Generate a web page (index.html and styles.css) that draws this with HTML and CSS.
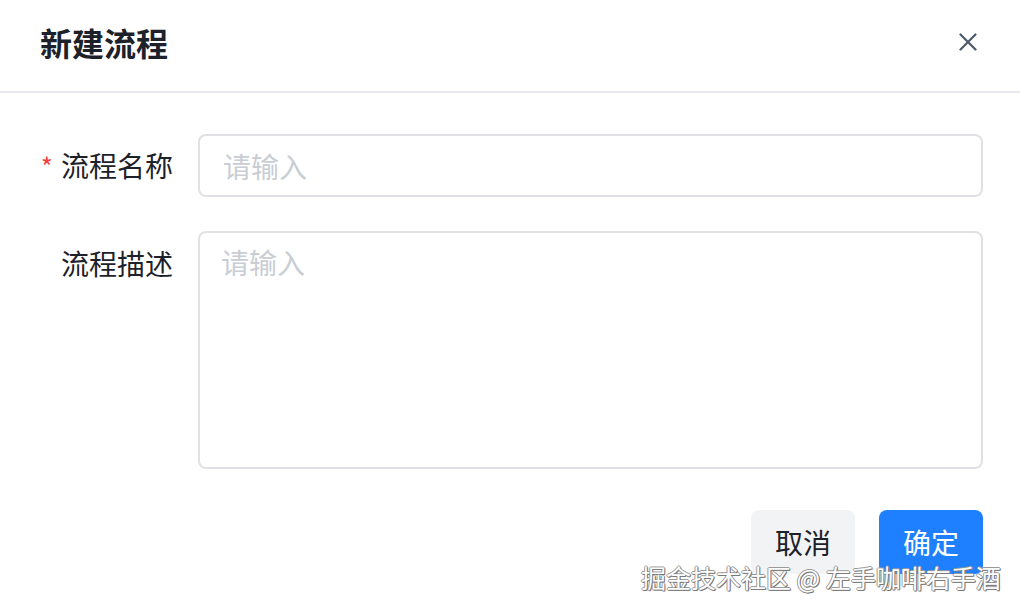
FILE: index.html
```html
<!DOCTYPE html>
<html lang="zh-CN">
<head>
  <meta charset="UTF-8">
  <meta name="viewport" content="width=device-width, initial-scale=1.0">
  <title>新建流程</title>
  <link rel="stylesheet" href="styles.css">
</head>
<body>
  <div class="dialog">
    <div class="dialog-header">
      <h2>新建流程</h2>
      <button type="button" class="close-btn" aria-label="关闭">
        <svg width="18" height="18" viewBox="0 0 18 18" fill="none">
          <path d="M1.5 1.5L16.5 16.5M16.5 1.5L1.5 16.5" stroke="#4e5969" stroke-width="2.2" stroke-linecap="round"/>
        </svg>
      </button>
    </div>

    <form class="dialog-body">
      <div class="form-row">
        <label for="name" class="form-label"><span class="required">*</span>流程名称</label>
        <input type="text" id="name" class="form-input" placeholder="请输入">
      </div>
      <div class="form-row">
        <label for="desc" class="form-label">流程描述</label>
        <textarea id="desc" class="form-textarea" placeholder="请输入"></textarea>
      </div>

      <div class="dialog-footer">
        <button type="button" class="btn btn-cancel">取消</button>
        <button type="button" class="btn btn-primary">确定</button>
      </div>
    </form>
  </div>

  <div class="watermark">掘金技术社区 @ 左手咖啡右手酒</div>
</body>
</html>
```

FILE: styles.css
```css
body {
  margin: 0;
  background-color: #ffffff;
  font-family: "Noto Sans CJK SC", "Noto Sans", sans-serif;
  color: #1d2129;
  height: 609px;
  overflow: hidden;
  position: relative;
}
.dialog {
  width: 1020px;
}
.dialog-header {
  height: 93px;
  border-bottom: 2px solid #e8e9ec;
  box-sizing: border-box;
  display: flex;
  align-items: center;
  justify-content: space-between;
  padding: 0 43px 8px 40px;
}
.dialog-header h2 {
  margin: 0;
  font-size: 32px;
  font-weight: 700;
  color: #1d2129;
  line-height: 1;
}
.close-btn {
  background: none;
  border: none;
  padding: 0;
  width: 18px;
  height: 18px;
  cursor: pointer;
  display: flex;
}
.dialog-body {
  padding: 41px 37px 0 40px;
  display: flex;
  flex-direction: column;
  gap: 34px;
}
.form-row {
  display: flex;
  align-items: flex-start;
  gap: 25px;
}
.form-label {
  width: 133px;
  flex-shrink: 0;
  text-align: right;
  font-size: 28px;
  line-height: 63px;
  color: #1d2129;
}
.form-row:nth-child(2) .form-label {
  line-height: 64px;
}
.required {
  color: #f53f3f;
  margin-right: 8px;
  font-size: 26px;
}
.form-input,
.form-textarea {
  flex: 1;
  box-sizing: border-box;
  border: 2px solid #e0e1e4;
  border-radius: 8px;
  font-family: inherit;
  font-size: 28px;
  color: #1d2129;
  padding: 0 23px;
  outline: none;
  background: #fff;
}
.form-input {
  height: 63px;
}
.form-textarea {
  height: 238px;
  resize: none;
  padding: 10px 21px;
  line-height: 1.4;
}
.form-input::placeholder,
.form-textarea::placeholder {
  color: #c9cdd4;
}
.dialog-footer {
  display: flex;
  justify-content: flex-end;
  gap: 24px;
  margin-top: 7px;
}
.btn {
  width: 104px;
  height: 64px;
  border: none;
  border-radius: 8px;
  font-family: inherit;
  font-size: 28px;
  cursor: pointer;
}
.btn-cancel {
  background-color: #f2f3f5;
  color: #1d2129;
}
.btn-primary {
  background-color: #1e80ff;
  color: #ffffff;
}
.watermark {
  position: absolute;
  left: 641px;
  top: 559px;
  font-size: 25px;
  color: #ffffff;
  white-space: nowrap;
  text-shadow: 1px 1px 0 #7a7a7a, -1px 0 0 #9a9a9a, 0 -1px 0 #9a9a9a, 1px 0 0 #8a8a8a, 0 1px 0 #8a8a8a;
}
```
